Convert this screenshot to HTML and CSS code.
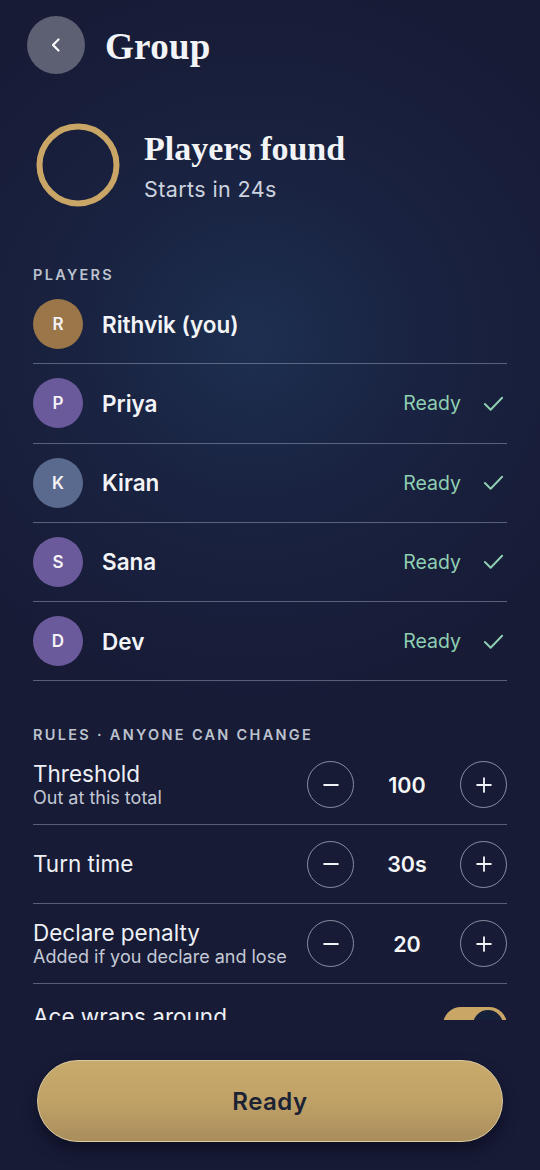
FILE: index.html
```html
<!DOCTYPE html>
<html lang="en">
<head>
    <meta charset="UTF-8">
    <meta name="viewport" content="width=device-width, initial-scale=1.0">
    <title>Group</title>
    <link rel="stylesheet" href="styles.css">
</head>
<body>
    <div class="screen">
        <div class="content">
            <div class="header">
                <button class="back-button" aria-label="Back">
                    <svg viewBox="0 0 24 24" fill="none" stroke="currentColor" stroke-width="2.2" stroke-linecap="round" stroke-linejoin="round">
                        <path d="M14.5 6.5L9 12l5.5 5.5" />
                    </svg>
                </button>
                <h1>Group</h1>
            </div>

            <div class="status">
                <svg class="ring" viewBox="0 0 90 90">
                    <circle cx="45" cy="45" r="38.5" fill="none" stroke="#c9a566" stroke-width="6" />
                </svg>
                <div class="status-text">
                    <h2>Players found</h2>
                    <p>Starts in 24s</p>
                </div>
            </div>

            <div class="section-label players-label">PLAYERS</div>
            <ul class="players">
                <li class="player">
                    <span class="avatar gold">R</span>
                    <span class="name">Rithvik (you)</span>
                </li>
                <li class="player">
                    <span class="avatar violet">P</span>
                    <span class="name">Priya</span>
                    <span class="ready">Ready</span>
                    <svg class="check" viewBox="0 0 24 24" fill="none" stroke="currentColor" stroke-width="2" stroke-linecap="round" stroke-linejoin="round"><path d="M3 12.5l6 6L21 6" /></svg>
                </li>
                <li class="player">
                    <span class="avatar slate">K</span>
                    <span class="name">Kiran</span>
                    <span class="ready">Ready</span>
                    <svg class="check" viewBox="0 0 24 24" fill="none" stroke="currentColor" stroke-width="2" stroke-linecap="round" stroke-linejoin="round"><path d="M3 12.5l6 6L21 6" /></svg>
                </li>
                <li class="player">
                    <span class="avatar violet">S</span>
                    <span class="name">Sana</span>
                    <span class="ready">Ready</span>
                    <svg class="check" viewBox="0 0 24 24" fill="none" stroke="currentColor" stroke-width="2" stroke-linecap="round" stroke-linejoin="round"><path d="M3 12.5l6 6L21 6" /></svg>
                </li>
                <li class="player">
                    <span class="avatar violet">D</span>
                    <span class="name">Dev</span>
                    <span class="ready">Ready</span>
                    <svg class="check" viewBox="0 0 24 24" fill="none" stroke="currentColor" stroke-width="2" stroke-linecap="round" stroke-linejoin="round"><path d="M3 12.5l6 6L21 6" /></svg>
                </li>
            </ul>

            <div class="section-label rules-label">RULES · ANYONE CAN CHANGE</div>
            <ul class="rules">
                <li class="rule">
                    <div class="rule-text">
                        <div class="rule-name">Threshold</div>
                        <div class="rule-hint">Out at this total</div>
                    </div>
                    <div class="stepper">
                        <button class="step" aria-label="Decrease"><svg viewBox="0 0 24 24" stroke="currentColor" stroke-width="2" stroke-linecap="round"><path d="M4.5 12h15" /></svg></button>
                        <span class="value">100</span>
                        <button class="step" aria-label="Increase"><svg viewBox="0 0 24 24" stroke="currentColor" stroke-width="2" stroke-linecap="round"><path d="M4.5 12h15M12 4.5v15" /></svg></button>
                    </div>
                </li>
                <li class="rule">
                    <div class="rule-text">
                        <div class="rule-name">Turn time</div>
                    </div>
                    <div class="stepper">
                        <button class="step" aria-label="Decrease"><svg viewBox="0 0 24 24" stroke="currentColor" stroke-width="2" stroke-linecap="round"><path d="M4.5 12h15" /></svg></button>
                        <span class="value">30s</span>
                        <button class="step" aria-label="Increase"><svg viewBox="0 0 24 24" stroke="currentColor" stroke-width="2" stroke-linecap="round"><path d="M4.5 12h15M12 4.5v15" /></svg></button>
                    </div>
                </li>
                <li class="rule">
                    <div class="rule-text">
                        <div class="rule-name">Declare penalty</div>
                        <div class="rule-hint">Added if you declare and lose</div>
                    </div>
                    <div class="stepper">
                        <button class="step" aria-label="Decrease"><svg viewBox="0 0 24 24" stroke="currentColor" stroke-width="2" stroke-linecap="round"><path d="M4.5 12h15" /></svg></button>
                        <span class="value">20</span>
                        <button class="step" aria-label="Increase"><svg viewBox="0 0 24 24" stroke="currentColor" stroke-width="2" stroke-linecap="round"><path d="M4.5 12h15M12 4.5v15" /></svg></button>
                    </div>
                </li>
                <li class="rule toggle-rule">
                    <div class="rule-text">
                        <div class="rule-name">Ace wraps around</div>
                    </div>
                    <span class="toggle"><span class="knob"></span></span>
                </li>
            </ul>
        </div>

        <div class="footer">
            <button class="ready-button">Ready</button>
        </div>
    </div>
</body>
</html>
```
FILE: styles.css
```css
* {
    box-sizing: border-box;
}

body {
    margin: 0;
    padding: 0;
    font-family: Inter, "Noto Sans", sans-serif;
    color: #f1f3f8;
    background: #171b36;
}

.screen {
    width: 540px;
    height: 1170px;
    display: flex;
    flex-direction: column;
    background:
        radial-gradient(ellipse 380px 360px at 47% 29%, #1d2f50 0%, rgba(27, 40, 72, 0.6) 45%, rgba(23, 27, 54, 0) 100%),
        #171b36;
}

.content {
    height: 1020px;
    overflow: hidden;
    padding: 16px 33px 0;
}

button {
    font-family: inherit;
    border: none;
    padding: 0;
    cursor: pointer;
}

.header {
    display: flex;
    align-items: center;
    gap: 20px;
    margin-left: -6px;
    height: 58px;
}

.back-button {
    width: 58px;
    height: 58px;
    border-radius: 50%;
    background: rgba(255, 255, 255, 0.3);
    color: #fff;
    display: flex;
    align-items: center;
    justify-content: center;
}

.back-button svg {
    width: 24px;
    height: 24px;
}

h1 {
    margin: 0;
    font-family: "Liberation Serif", "DejaVu Serif", serif;
    font-weight: bold;
    font-size: 37px;
    letter-spacing: 0.3px;
    color: #f3f4f8;
    position: relative;
    top: 1px;
}

.status {
    display: flex;
    align-items: center;
    gap: 21px;
    margin-top: 46px;
}

.ring {
    width: 90px;
    height: 90px;
    flex-shrink: 0;
}

.status-text h2 {
    margin: 0;
    font-family: "Liberation Serif", "DejaVu Serif", serif;
    font-weight: bold;
    font-size: 34px;
    line-height: 40px;
    color: #f3f4f8;
}

.status-text p {
    margin: 7px 0 0;
    font-size: 21.5px;
    letter-spacing: 0.4px;
    line-height: 26px;
    color: #cdd3de;
}

.section-label {
    font-size: 14.5px;
    font-weight: 600;
    letter-spacing: 2.3px;
    line-height: 20px;
    color: #bcc2ce;
}

.players-label {
    margin-top: 55px;
}

.rules-label {
    margin-top: 44px;
}

.players, .rules {
    list-style: none;
    margin: 0;
    padding: 0;
}

.player {
    display: flex;
    align-items: center;
    height: 79.25px;
    border-bottom: 1.5px solid rgba(170, 180, 200, 0.45);
}

.avatar {
    width: 50px;
    height: 50px;
    border-radius: 50%;
    display: flex;
    align-items: center;
    justify-content: center;
    font-size: 17px;
    font-weight: 600;
    color: #f4f2f6;
    flex-shrink: 0;
}

.avatar.gold {
    background: #9a7648;
}

.avatar.violet {
    background: #6b5a9b;
}

.avatar.slate {
    background: #5a6a8e;
}

.name {
    margin-left: 19px;
    font-size: 22.5px;
    font-weight: 600;
    color: #f3f4f8;
    flex: 1;
}

.ready {
    font-size: 19.5px;
    color: #8fcfb2;
}

.check {
    width: 23px;
    height: 23px;
    margin-left: 21px;
    margin-right: 2px;
    color: #8fcfb2;
}

.rule {
    display: flex;
    align-items: center;
    height: 79.5px;
    border-bottom: 1.5px solid rgba(170, 180, 200, 0.45);
}

.rule-text {
    flex: 1;
}

.rule-name {
    font-size: 22.5px;
    line-height: 26px;
    color: #eef0f5;
}

.rule-hint {
    font-size: 18px;
    line-height: 22px;
    color: #c3c9d5;
}

.stepper {
    display: flex;
    align-items: center;
}

.step {
    width: 47px;
    height: 47px;
    border-radius: 50%;
    background: transparent;
    border: 1.5px solid rgba(210, 215, 228, 0.6);
    color: #f1f3f8;
    display: flex;
    align-items: center;
    justify-content: center;
}

.step svg {
    width: 22px;
    height: 22px;
}

.value {
    width: 106px;
    text-align: center;
    font-size: 21.5px;
    font-weight: 600;
    color: #f6f7fa;
}

.toggle-rule {
    align-items: flex-start;
    padding-top: 20px;
}

.toggle {
    width: 64px;
    height: 36px;
    border-radius: 18px;
    background: #c9a566;
    display: flex;
    align-items: center;
    justify-content: flex-end;
    padding: 0 4px;
    margin-top: 3px;
}

.knob {
    width: 30px;
    height: 30px;
    border-radius: 50%;
    background: #15213a;
}

.footer {
    flex: 1;
    padding: 40px 37px 0;
    background: #171b36;
}

.ready-button {
    width: 100%;
    height: 82px;
    border-radius: 41px;
    border: 1.5px solid #dccaa0;
    background: linear-gradient(to bottom, #c8aa6c 0%, #c0a267 50%, #a98d5b 100%);
    color: #1b2233;
    font-size: 24px;
    font-weight: 600;
    letter-spacing: 0.5px;
    box-shadow: 0 8px 14px rgba(8, 10, 25, 0.6);
}
```
